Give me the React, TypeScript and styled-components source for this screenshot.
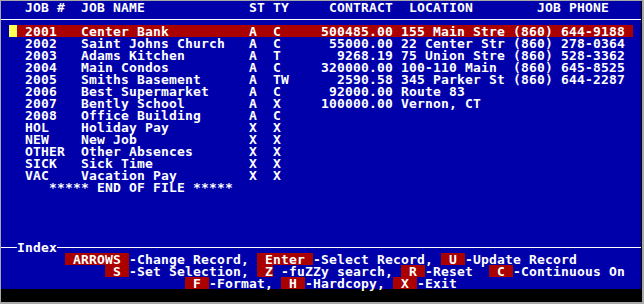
import React from "react";
import styled, { createGlobalStyle } from "styled-components";

const Global = createGlobalStyle`
  html, body { margin: 0; padding: 0; background: #a8a8a8; }
  body { width: 644px; height: 304px; overflow: hidden; }
`;

const Frame = styled.div`
  width: 644px;
  height: 304px;
  box-sizing: border-box;
  padding: 1px 2px 2px 1px;
  background: #a8a8a8;
`;

const Screen = styled.div`
  width: 641px;
  height: 301px;
  background: #000;
  font-family: "DejaVu Sans Mono", monospace;
  font-weight: bold;
  font-size: 13px;
  letter-spacing: 0.173px;
  color: #fff;
`;

const Display = styled.div`
  width: 640px;
  height: 288px;
  background: #0000aa;
  display: flex;
  flex-direction: column;
`;

const Row = styled.div`
  height: 12px;
  line-height: 13px;
  white-space: pre;
`;

const RuleRow = styled.div`
  height: 12px;
  display: flex;
  align-items: flex-start;
  line-height: 13px;
  white-space: pre;
`;

const HLine = styled.div<{ $w?: number }>`
  flex: ${(p) => (p.$w ? `0 0 ${p.$w}px` : "1 1 auto")};
  height: 1px;
  margin-top: 6px;
  background: #fff;
`;

const Cell = styled.span`
  display: inline-block;
  vertical-align: top;
  height: 12px;
  line-height: 13px;
`;

const Highlight = styled(Cell)`
  background: #aa0000;
`;

const Key = styled(Cell)`
  background: #aa0000;
`;

const Cursor = styled(Cell)`
  width: 8px;
  background: #ffff55;
`;

type Job = {
  id: string;
  name: string;
  st: string;
  ty: string;
  amt?: string;
  loc?: string;
  phone?: string;
};

const jobs: Job[] = [
  { id: "2001", name: "Center Bank", st: "A", ty: "C", amt: "500485.00", loc: "155 Main Stre", phone: "(860) 644-9188" },
  { id: "2002", name: "Saint Johns Church", st: "A", ty: "C", amt: "55000.00", loc: "22 Center Str", phone: "(860) 278-0364" },
  { id: "2003", name: "Adams Kitchen", st: "A", ty: "T", amt: "9268.19", loc: "75 Union Stre", phone: "(860) 528-3362" },
  { id: "2004", name: "Main Condos", st: "A", ty: "C", amt: "320000.00", loc: "100-110 Main", phone: "(860) 645-8525" },
  { id: "2005", name: "Smiths Basement", st: "A", ty: "TW", amt: "2590.58", loc: "345 Parker St", phone: "(860) 644-2287" },
  { id: "2006", name: "Best Supermarket", st: "A", ty: "C", amt: "92000.00", loc: "Route 83" },
  { id: "2007", name: "Bently School", st: "A", ty: "X", amt: "100000.00", loc: "Vernon, CT" },
  { id: "2008", name: "Office Building", st: "A", ty: "C" },
  { id: "HOL", name: "Holiday Pay", st: "X", ty: "X" },
  { id: "NEW", name: "New Job", st: "X", ty: "X" },
  { id: "OTHER", name: "Other Absences", st: "X", ty: "X" },
  { id: "SICK", name: "Sick Time", st: "X", ty: "X" },
  { id: "VAC", name: "Vacation Pay", st: "X", ty: "X" },
];

const place = (items: [number, string][]) => {
  let s = "";
  for (const [col, text] of items) {
    s = s.padEnd(col) + text;
  }
  return s;
};

const formatJob = (j: Job) =>
  " " +
  j.id.padEnd(7) +
  j.name.padEnd(21) +
  j.st.padEnd(3) +
  j.ty.padEnd(6) +
  (j.amt ?? "").padStart(9) +
  " " +
  (j.loc ?? "").padEnd(13) +
  " " +
  (j.phone ?? "").padEnd(14) +
  " ";

const header = place([
  [3, "JOB #"],
  [10, "JOB NAME"],
  [31, "ST"],
  [34, "TY"],
  [41, "CONTRACT"],
  [51, "LOCATION"],
  [67, "JOB PHONE"],
]);

type Seg = { t: string; key?: boolean };

const footer: Seg[][] = [
  [
    { t: "        " },
    { t: " ARROWS ", key: true },
    { t: "-Change Record, " },
    { t: " Enter ", key: true },
    { t: "-Select Record, " },
    { t: " U ", key: true },
    { t: "-Update Record" },
  ],
  [
    { t: "             " },
    { t: " S ", key: true },
    { t: "-Set Selection, " },
    { t: " Z", key: true },
    { t: " -fuZZy search, " },
    { t: " R ", key: true },
    { t: "-Reset  " },
    { t: " C ", key: true },
    { t: "-Continuous On" },
  ],
  [
    { t: "                       " },
    { t: " F ", key: true },
    { t: "-Format, " },
    { t: " H ", key: true },
    { t: "-Hardcopy, " },
    { t: " X ", key: true },
    { t: "-Exit" },
  ],
];

const SELECTED = 0;

export default function App() {
  return (
    <Frame>
      <Global />
      <Screen>
        <Display>
          <Row>{header}</Row>
          <RuleRow>
            <HLine />
          </RuleRow>
          {jobs.map((j, i) =>
            i === SELECTED ? (
              <Row key={j.id}>
                {" "}
                <Cursor />
                <Highlight>{formatJob(j)}</Highlight>
              </Row>
            ) : (
              <Row key={j.id}>{"  " + formatJob(j)}</Row>
            )
          )}
          <Row>{place([[6, "***** END OF FILE *****"]])}</Row>
          <Row />
          <Row />
          <Row />
          <Row />
          <RuleRow>
            <HLine $w={16} />
            <Cell>Index</Cell>
            <HLine />
          </RuleRow>
          {footer.map((line, i) => (
            <Row key={i}>
              {line.map((s, k) =>
                s.key ? <Key key={k}>{s.t}</Key> : <React.Fragment key={k}>{s.t}</React.Fragment>
              )}
            </Row>
          ))}
        </Display>
      </Screen>
    </Frame>
  );
}
